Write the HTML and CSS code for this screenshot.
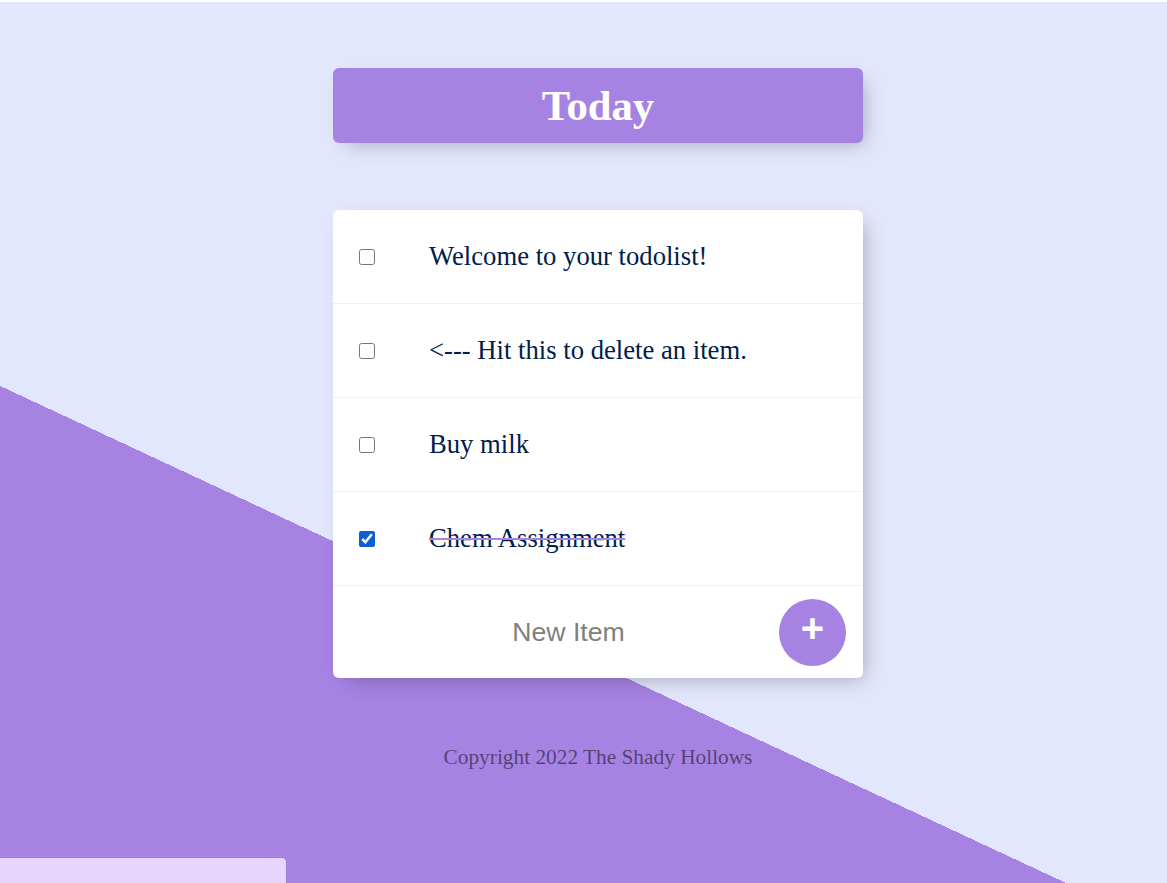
FILE: index.html
```html
<!DOCTYPE html>
<html lang="en">
<head>
<meta charset="utf-8">
<title>To-Do List</title>
<link rel="stylesheet" href="styles.css">
</head>
<body>
  <div class="box heading">
    <h1 class="title">Today</h1>
  </div>

  <div class="box list">
    <div class="item">
      <input class="check" type="checkbox">
      <p class="text">Welcome to your todolist!</p>
    </div>
    <div class="item">
      <input class="check" type="checkbox">
      <p class="text">&lt;--- Hit this to delete an item.</p>
    </div>
    <div class="item">
      <input class="check" type="checkbox">
      <p class="text">Buy milk</p>
    </div>
    <div class="item">
      <input class="check" type="checkbox" checked>
      <p class="text">Chem Assignment</p>
    </div>
    <form class="item add-form">
      <input class="new-item" type="text" name="newItem" placeholder="New Item" autocomplete="off">
      <button class="add-btn" type="submit" name="list">+</button>
    </form>
  </div>

  <footer class="footer">Copyright 2022 The Shady Hollows</footer>

  <div class="corner-panel"></div>
</body>
</html>
```

FILE: styles.css
```css
html {
  border-top: 2px solid #ffffff;
  background-color: #E3E7FD;
  background-image: linear-gradient(25deg, #A683E3 50%, #E3E7FD 50%);
  background-size: 100% 1312px;
  background-repeat: no-repeat;
  height: 881px;
  overflow: hidden;
}

body {
  margin: 0;
  padding-top: 66px;
  padding-left: 29px;
  font-family: "Liberation Serif", "Times New Roman", serif;
}

.box {
  width: 530px;
  margin: 0 auto;
  border-radius: 6px;
  box-shadow: 7px 7px 20px -7px rgba(0, 0, 0, 0.3);
}

.heading {
  background-color: #A683E3;
  text-align: center;
}

.title {
  margin: 0;
  padding: 13px;
  color: #ffffff;
  font-size: 42.7px;
  font-weight: bold;
  line-height: 49px;
}

.list {
  margin-top: 67px;
  background: #ffffff;
}

.item {
  height: 93px;
  display: flex;
  align-items: center;
  border-bottom: 1px solid #F1F1F1;
}

.item:last-child {
  border-bottom: 0;
  height: 92px;
}

.check {
  width: 16px;
  height: 16px;
  margin: 0 27px 0 26px;
  flex: none;
  accent-color: #0b5fd0;
}

.text {
  margin: 0;
  padding: 0 27px;
  font-size: 26.67px;
  color: #00204a;
}

.check:checked + .text {
  text-decoration: line-through;
  text-decoration-color: #A683E3;
}

.add-form {
  margin: 0;
}

.new-item {
  margin-left: 27px;
  width: 417px;
  height: 80px;
  padding: 0;
  border: none;
  background: transparent;
  text-align: center;
  font-family: "Liberation Sans", Arial, sans-serif;
  font-size: 26.67px;
  color: #333333;
}

.new-item::placeholder {
  color: #808080;
  opacity: 1;
}

.new-item:focus {
  outline: none;
}

.add-btn {
  width: 67px;
  height: 67px;
  margin-left: 2px;
  padding: 0 0 8px 0;
  border: 0;
  border-radius: 50%;
  background-color: #A683E3;
  color: #ffffff;
  font-family: "Liberation Sans", Arial, sans-serif;
  font-size: 40px;
  font-weight: bold;
  line-height: 1;
  cursor: pointer;
}

.footer {
  margin-top: 67px;
  text-align: center;
  font-size: 21.33px;
  color: rgba(0, 0, 0, 0.5);
}

.corner-panel {
  position: fixed;
  left: -6px;
  bottom: -10px;
  width: 291px;
  height: 34px;
  background: #E8D5FE;
  border: 1px solid #9A7DD6;
  border-radius: 5px;
}
```
